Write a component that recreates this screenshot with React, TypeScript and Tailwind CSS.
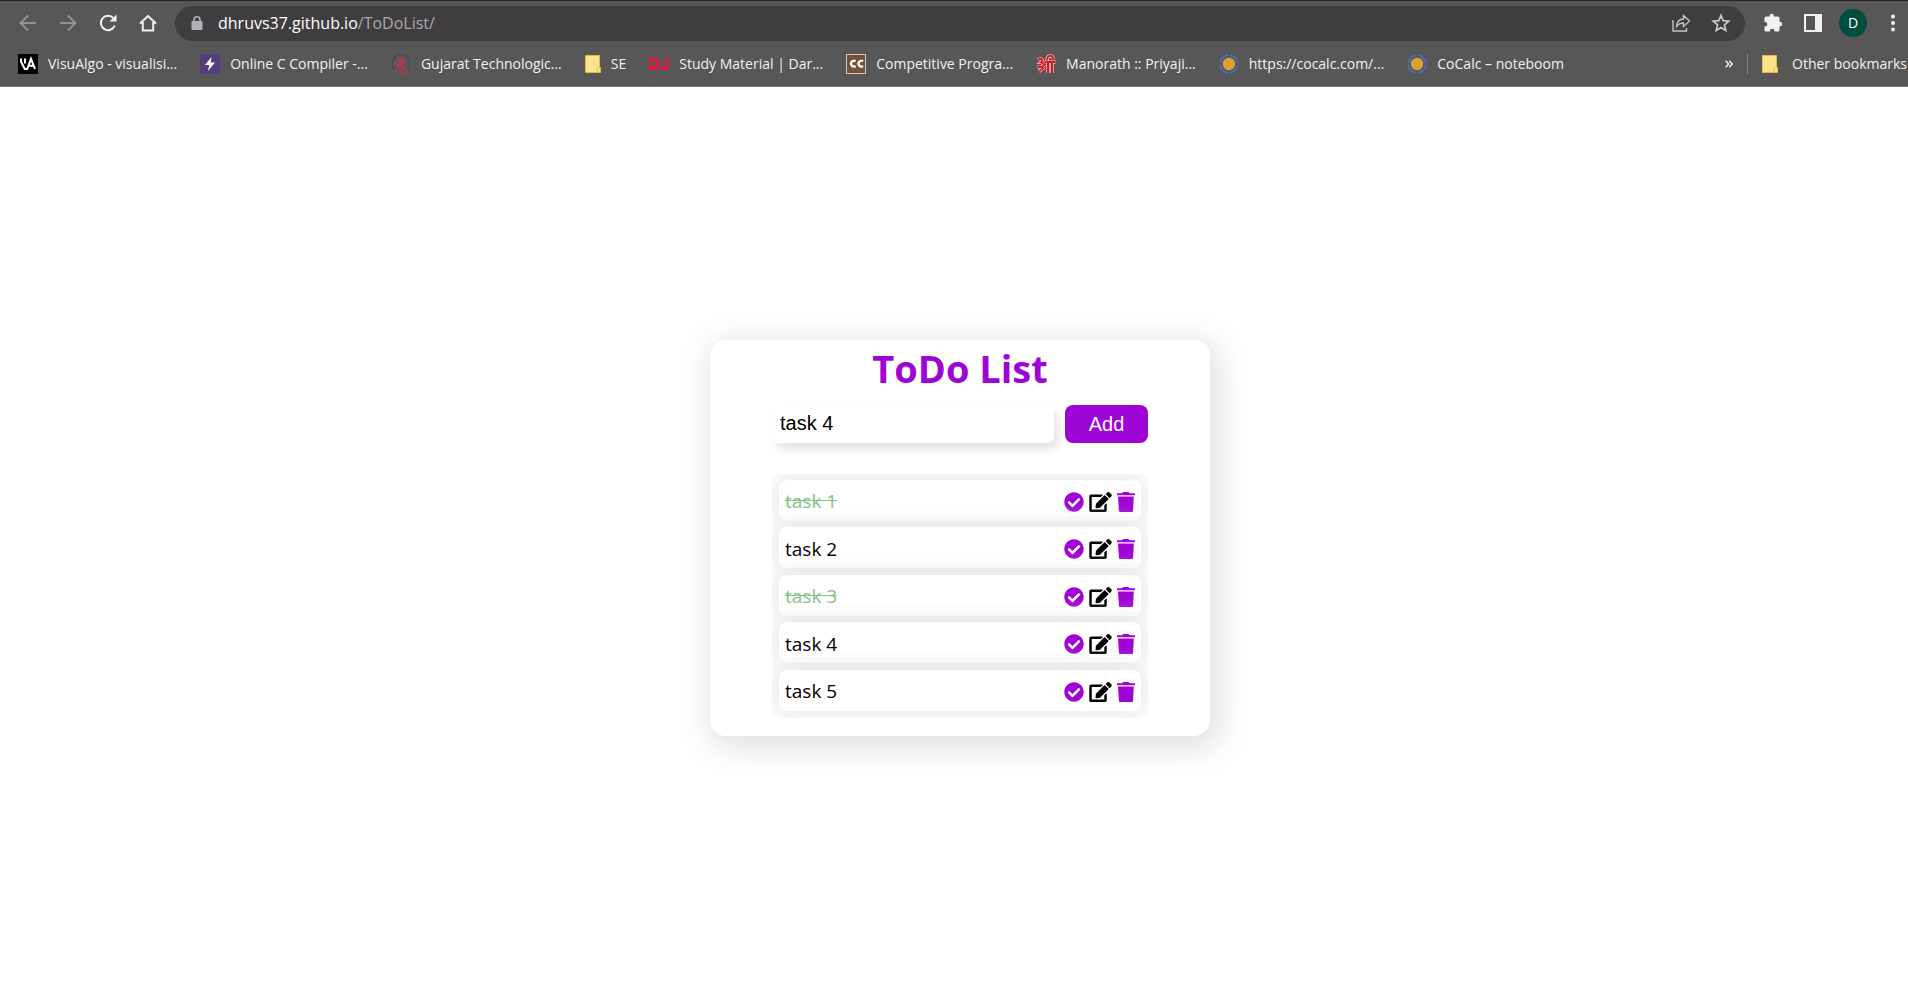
import React, { useState } from "react";
import { FaCheckCircle, FaEdit } from "react-icons/fa";

type Icon = () => React.ReactElement;

const VisuAlgoIcon: Icon = () => (
  <svg viewBox="0 0 20 20" className="size-5 shrink-0" aria-hidden="true">
    <rect width="20" height="20" fill="#000" />
    <path d="M3 4.5v3.2L6.8 15h2.4L13 4.8l4 10.2M7 4.5v5M10.5 11.8h5" fill="none" stroke="#fff" strokeWidth="2" />
  </svg>
);

const BoltIcon: Icon = () => (
  <svg viewBox="0 0 20 20" className="size-5 shrink-0" aria-hidden="true">
    <rect width="20" height="20" fill="#563d7c" />
    <path d="M11.6 3 5 11h4.2L8 17l7-8.4h-4.4z" fill="#fff" />
  </svg>
);

const CrestIcon: Icon = () => (
  <svg viewBox="0 0 20 20" className="size-5 shrink-0" aria-hidden="true">
    <path d="M3.2 15.500A9 9 0 1 1 16.800 15.500" fill="none" stroke="#4b4272" strokeWidth="1.300" />
    <path d="M8.500 4.200h4v9M8.500 4.200v2.600h4M6.500 8.500h3.500v2.200H6.500v2.300M9.500 12.500h3M5.500 14.400h9" fill="none" stroke="#cf2f4e" strokeWidth="1.300" />
    <circle cx="4.500" cy="17" r="1.600" fill="#b83a3a" />
    <circle cx="10" cy="18.300" r="1.700" fill="#b83a3a" />
    <circle cx="15.500" cy="17" r="1.600" fill="#b83a3a" />
  </svg>
);

const FolderIcon: Icon = () => (
  <svg viewBox="0 0 16 18" className="h-[18px] w-4 shrink-0" aria-hidden="true">
    <path d="M.5.500h14v12h1v5H.500z" fill="#ffe38c" stroke="#e3bd3f" />
    <path d="M12 17.500v-4l1.500-1.500h1" fill="none" stroke="#e3bd3f" />
  </svg>
);

const DjIcon: Icon = () => (
  <svg viewBox="0 0 20 20" className="size-5 shrink-0" aria-hidden="true">
    <path d="M0 5.500h5a4.300 4.300 0 0 1 0 8.800H1.700V8.500M18.300 4v7.300a3 3 0 0 1-3 3H11" fill="none" stroke="#e0173d" strokeWidth="3.400" />
  </svg>
);

const CcIcon: Icon = () => (
  <svg viewBox="0 0 20 20" className="size-5 shrink-0" aria-hidden="true">
    <rect x=".5" y=".5" width="19" height="19" fill="#73523c" stroke="#d6c3b0" />
    <path d="M9.600 7.200a2.900 2.900 0 1 0 0 4.800M17 7.200a2.900 2.900 0 1 0 0 4.800" fill="none" stroke="#fff" strokeWidth="2.300" />
  </svg>
);

const ShriIcon: Icon = () => {
  const d = "M9 8h10.500M2 6c3-2.500 6 0 3 2.500 4 0 4 4 0 4.500H1.500M7 10.500h3.500M3 17.500l5-4M12 19V8.500M16 19V8.500M11 6.500c0-6 6.500-6 6-1.500";
  return (
    <svg viewBox="0 0 20 20" className="size-5 shrink-0" aria-hidden="true">
      <path d={d} fill="none" stroke="#f3dede" strokeWidth="3.200" />
      <path d={d} fill="none" stroke="#e8141c" strokeWidth="2" />
    </svg>
  );
};

const CoCalcIcon: Icon = () => (
  <svg viewBox="0 0 20 20" className="size-5 shrink-0" aria-hidden="true">
    <circle cx="10" cy="10" r="6.200" fill="#d9a036" />
    <circle cx="10" cy="10" r="8.800" fill="none" stroke="#4475c9" strokeWidth="1.400" strokeDasharray="11.800 2" strokeDashoffset="-1" />
  </svg>
);

const bookmarks: { label: string; icon: Icon }[] = [
  { label: "VisuAlgo - visualisi...", icon: VisuAlgoIcon },
  { label: "Online C Compiler -...", icon: BoltIcon },
  { label: "Gujarat Technologic...", icon: CrestIcon },
  { label: "SE", icon: FolderIcon },
  { label: "Study Material | Dar...", icon: DjIcon },
  { label: "Competitive Progra...", icon: CcIcon },
  { label: "Manorath :: Priyaji...", icon: ShriIcon },
  { label: "https://cocalc.com/...", icon: CoCalcIcon },
  { label: "CoCalc – noteboom", icon: CoCalcIcon },
];

function NavButton({ label, children }: { label: string; children: React.ReactNode }) {
  return (
    <button type="button" aria-label={label} className="flex size-5 shrink-0 items-center justify-center">
      {children}
    </button>
  );
}

function Toolbar() {
  return (
    <div className="flex h-9 items-center">
      <nav className="flex shrink-0 items-center gap-5 pl-[18px]">
        <NavButton label="Back">
          <svg viewBox="0 0 20 20" className="size-5" fill="none" stroke="#939393" strokeWidth="1.800">
            <path d="M18 10H3M10 2.500 2.500 10l7.500 7.500" />
          </svg>
        </NavButton>
        <NavButton label="Forward">
          <svg viewBox="0 0 20 20" className="size-5" fill="none" stroke="#939393" strokeWidth="1.800">
            <path d="M2 10h15M10 2.500l7.500 7.500-7.500 7.500" />
          </svg>
        </NavButton>
        <NavButton label="Reload">
          <svg viewBox="0 0 20 20" className="size-5" fill="none" stroke="#f1f1f1" strokeWidth="2">
            <path d="M16.800 12.500A7.200 7.200 0 1 1 15.500 5.200" />
            <path d="M18.500 1.500V8.500H11.500z" fill="#f1f1f1" stroke="none" />
          </svg>
        </NavButton>
        <NavButton label="Home">
          <svg viewBox="0 0 20 20" className="size-5" fill="none" stroke="#f1f1f1" strokeWidth="2">
            <path d="M2 10.500 10 3l8 7.500M4.800 9v8.500h10.400V9" />
          </svg>
        </NavButton>
      </nav>
      <div className="ml-[17px] flex h-[35px] min-w-0 flex-1 items-center rounded-full bg-[#403d41] pr-[14px] pl-4">
        <svg viewBox="0 0 12 14" className="h-[14px] w-3 shrink-0" aria-hidden="true">
          <rect x=".5" y="5" width="11" height="9" rx="1" fill="#b0b2b6" />
          <path d="M3 6V3.800a3 3 0 0 1 6 0V6" fill="none" stroke="#b0b2b6" strokeWidth="1.600" />
        </svg>
        <p className="ml-[15px] flex-1 text-base leading-6 text-[#a8a6a9]">
          <span className="text-white">dhruvs37.github.io</span>/ToDoList/
        </p>
        <div className="flex items-center gap-5">
          <NavButton label="Share">
            <svg viewBox="0 0 20 20" className="size-5" fill="none" stroke="#c3c2c4" strokeWidth="1.400">
              <path d="M2 7v11h13.500v-3M5.500 13.500c.5-5 3-7.500 7-7.500V2.500L18.500 8l-6 5.500V10c-3 0-5 1-7 3.500z" />
            </svg>
          </NavButton>
          <NavButton label="Bookmark this page">
            <svg viewBox="0 0 20 20" className="size-5" fill="none" stroke="#c9c8ca" strokeWidth="1.700">
              <path d="m10 2.500 2.200 5.200 5.600.5-4.300 3.700 1.300 5.500-4.800-2.900-4.800 2.900 1.300-5.500-4.300-3.700 5.600-.5z" />
            </svg>
          </NavButton>
        </div>
      </div>
      <div className="ml-[18px] flex shrink-0 items-center gap-5 pr-[5px]">
        <NavButton label="Extensions">
          <svg viewBox="0 0 20 20" className="size-5" fill="#f1f1f1">
            <path d="M6.500 3a2.200 2.200 0 0 1 4.400 0v.500H15A1.500 1.500 0 0 1 16.500 5v3.800h.5a2.200 2.200 0 0 1 0 4.400h-.5V17a1.500 1.500 0 0 1-1.500 1.500h-3.500V18a2.300 2.300 0 0 0-4.600 0v.500H3A1.500 1.500 0 0 1 1.500 17v-3.500H2a2.300 2.300 0 0 0 0-4.600h-.500V5A1.500 1.500 0 0 1 3 3.500h3.500z" />
          </svg>
        </NavButton>
        <NavButton label="Side panel">
          <svg viewBox="0 0 20 20" className="size-5">
            <path d="M1 1h18v18H1zM3 3v14h9V3z" fill="#f1f1f1" fillRule="evenodd" />
          </svg>
        </NavButton>
        <button
          type="button"
          className="-mx-1 flex size-7 items-center justify-center rounded-full bg-[#014d40] text-sm text-white"
        >
          D
        </button>
        <NavButton label="Menu">
          <svg viewBox="0 0 20 20" className="size-5" fill="#f1f1f1">
            <circle cx="10" cy="3.500" r="2" />
            <circle cx="10" cy="10" r="2" />
            <circle cx="10" cy="16.500" r="2" />
          </svg>
        </NavButton>
      </div>
    </div>
  );
}

function BookmarksBar() {
  return (
    <div className="flex items-center pt-[9px] pr-px pl-[18px] text-sm leading-7 whitespace-nowrap text-[#f1f1f1]">
      <ul className="flex min-w-0 flex-1 items-center gap-[23px]">
        {bookmarks.map(({ label, icon: BookmarkIcon }) => (
          <li key={label}>
            <a href="#" className="flex items-center gap-[10px]">
              <BookmarkIcon />
              {label}
            </a>
          </li>
        ))}
      </ul>
      <button type="button" aria-label="More bookmarks" className="mr-[14px]">
        <svg viewBox="0 0 8 8" className="size-2" fill="none" stroke="#f1f1f1" strokeWidth="1.500">
          <path d="m.7.700 3 3.300-3 3.300M4.300.700l3 3.300-3 3.300" />
        </svg>
      </button>
      <a href="#" className="flex items-center gap-[14px]">
        <span className="h-5 w-px bg-[#858585]" />
        <FolderIcon />
        Other bookmarks
      </a>
    </div>
  );
}

function TrashIcon() {
  return (
    <svg viewBox="0 0 18 20" className="h-5 w-[18px]" fill="#9f04d6" aria-hidden="true">
      <path d="M0 1.300h4.800L6.200 0h5.200l1.400 1.300H18v2H0zM1 4.600h15.800l-.7 14.200a1.300 1.300 0 0 1-1.300 1.200H3.200a1.300 1.300 0 0 1-1.300-1.200z" />
    </svg>
  );
}

interface Task {
  name: string;
  done: boolean;
}

const initialTasks: Task[] = [
  { name: "task 1", done: true },
  { name: "task 2", done: false },
  { name: "task 3", done: true },
  { name: "task 4", done: false },
  { name: "task 5", done: false },
];

function TodoCard() {
  const [tasks, setTasks] = useState(initialTasks);
  const [draft, setDraft] = useState("task 4");

  const add = (event: React.FormEvent) => {
    event.preventDefault();
    if (draft.trim()) setTasks([...tasks, { name: draft.trim(), done: false }]);
  };
  const toggle = (index: number) =>
    setTasks(tasks.map((task, i) => (i === index ? { ...task, done: !task.done } : task)));
  const remove = (index: number) => setTasks(tasks.filter((_, i) => i !== index));

  return (
    <section className="w-full max-w-[500px] rounded-2xl bg-white px-[62px] pt-1 pb-[18px] shadow-[5px_7px_32px_5px_#e2dfdf]">
      <h1 className="text-center text-[38px] leading-[48px] font-bold text-[#9f04d6]">ToDo List</h1>
      <form
        onSubmit={add}
        className="mt-[13px] flex gap-[11px] font-['Liberation_Sans',Arial,sans-serif] text-xl"
      >
        <input
          aria-label="Task"
          value={draft}
          onChange={(event) => setDraft(event.target.value)}
          className="h-[38px] min-w-0 flex-1 rounded-md bg-white px-2 text-black shadow-[4px_6px_8px_#e6e3e0] outline-none"
        />
        <button type="submit" className="h-[38px] w-[83px] rounded-lg bg-[#9f04d6] text-white">
          Add
        </button>
      </form>
      <ul className="mt-[31px] flex min-h-[244px] flex-col justify-between overflow-hidden rounded-lg px-[7px] pt-[6px] pb-[7px]">
        {tasks.map((task, index) => (
          <li
            key={index}
            className="flex h-[41px] items-center justify-between rounded-lg bg-white px-[6px] pt-[3px] shadow-[0_0_20px_3px_#e8e5e5]"
          >
            <span className={task.done ? "text-[19px] text-[#7fc283] line-through" : "text-[19px] text-black"}>
              {task.name}
            </span>
            <span className="flex items-center gap-[5px]">
              <button type="button" aria-label="Complete" onClick={() => toggle(index)}>
                <FaCheckCircle className="size-5 text-[#9f04d6]" />
              </button>
              <button type="button" aria-label="Edit" onClick={() => setDraft(task.name)}>
                <FaEdit className="h-5 w-[23px] text-black" />
              </button>
              <button type="button" aria-label="Delete" onClick={() => remove(index)}>
                <TrashIcon />
              </button>
            </span>
          </li>
        ))}
      </ul>
    </section>
  );
}

export default function App() {
  return (
    <div className="flex min-h-screen flex-col bg-white font-['Open_Sans','Noto_Sans',sans-serif]">
      <header className="border-t border-b border-t-[#252329] border-b-[#737373] bg-[#575757] pt-1 pb-2">
        <Toolbar />
        <BookmarksBar />
      </header>
      <main className="flex flex-1 items-center justify-center pt-[6px] pl-3">
        <TodoCard />
      </main>
    </div>
  );
}
